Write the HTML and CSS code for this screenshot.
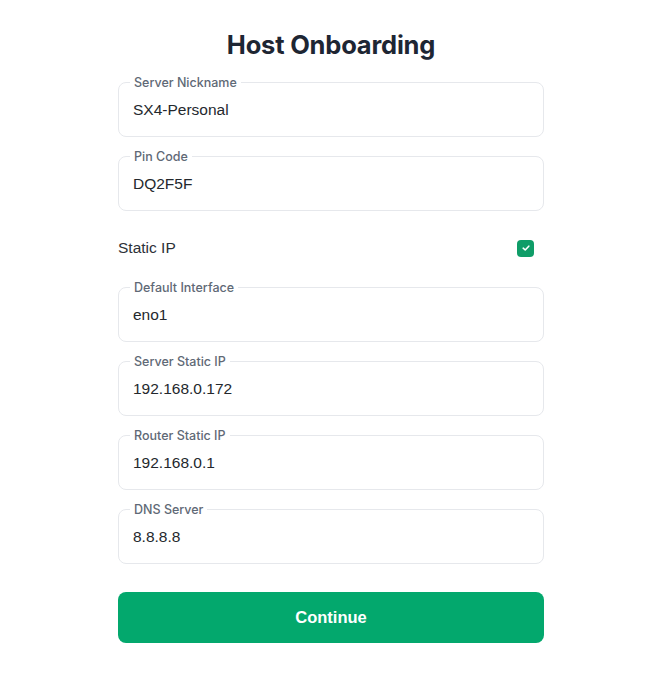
FILE: index.html
```html
<!DOCTYPE html>
<html lang="en">
<head>
    <meta charset="UTF-8">
    <meta name="viewport" content="width=device-width, initial-scale=1.0">
    <title>Host Onboarding</title>
    <link rel="stylesheet" href="styles.css">
</head>
<body>

    <main class="onboarding">
        <h1>Host Onboarding</h1>

        <form class="host-form">
            <fieldset class="field">
                <legend>Server Nickname</legend>
                <input type="text" value="SX4-Personal">
            </fieldset>

            <fieldset class="field">
                <legend>Pin Code</legend>
                <input type="text" value="DQ2F5F">
            </fieldset>

            <label class="toggle-row">
                <span>Static IP</span>
                <span class="check-box">
                    <svg width="10" height="10" viewBox="0 0 10 10"><path d="M2.2 5.2 L4.2 7 L7.8 3.2" fill="none" stroke="#fff" stroke-width="1.6" stroke-linecap="round" stroke-linejoin="round"/></svg>
                </span>
            </label>

            <fieldset class="field">
                <legend>Default Interface</legend>
                <input type="text" value="eno1">
            </fieldset>

            <fieldset class="field">
                <legend>Server Static IP</legend>
                <input type="text" value="192.168.0.172">
            </fieldset>

            <fieldset class="field">
                <legend>Router Static IP</legend>
                <input type="text" value="192.168.0.1">
            </fieldset>

            <fieldset class="field">
                <legend>DNS Server</legend>
                <input type="text" value="8.8.8.8">
            </fieldset>

            <button type="button" class="continue-button">Continue</button>
        </form>
    </main>

</body>
</html>
```

FILE: styles.css
```css
body {
    margin: 0;
    padding: 0 8px 0 0;
    background-color: #fff;
    font-family: "Liberation Sans", Arial, sans-serif;
}

.onboarding {
    width: 426px;
    margin: 0 auto;
    padding-top: 29px;
}

h1 {
    margin: 0 0 15px;
    text-align: center;
    font-family: Inter, "Liberation Sans", sans-serif;
    font-size: 25.5px;
    font-weight: 700;
    color: #1e2633;
    letter-spacing: -0.2px;
}

.host-form {
    display: flex;
    flex-direction: column;
}

.field {
    margin: 0 0 12px;
    padding: 0 11px 8px;
    border: 1px solid #e6e8ec;
    border-radius: 8px;
}

.field legend {
    padding: 0 4px;
    font-family: Inter, "Liberation Sans", sans-serif;
    font-size: 12.5px;
    font-weight: 500;
    line-height: 15px;
    color: #5f6976;
}

.field input {
    display: block;
    width: 100%;
    height: 38px;
    margin: 0;
    padding: 2px 3px 0;
    border: none;
    outline: none;
    background: transparent;
    font-family: "Liberation Sans", Arial, sans-serif;
    font-size: 15.5px;
    color: #24282d;
    box-sizing: border-box;
}

.toggle-row {
    display: flex;
    justify-content: space-between;
    align-items: center;
    height: 24px;
    margin: 13px 0 20px;
    font-size: 15.5px;
    color: #2d3138;
}

.check-box {
    display: flex;
    justify-content: center;
    align-items: center;
    width: 17px;
    height: 17px;
    margin-right: 10px;
    background-color: #0f9d68;
    border-radius: 4px;
}

.continue-button {
    height: 51px;
    margin-top: 16px;
    border: none;
    border-radius: 8px;
    background-color: #03a86d;
    color: #fff;
    font-family: "Liberation Sans", Arial, sans-serif;
    font-size: 16.5px;
    font-weight: 700;
    cursor: pointer;
}
```
